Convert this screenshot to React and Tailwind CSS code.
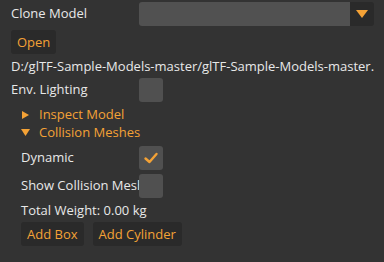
import React from 'react';

const orange = 'text-[#f4a236]';

const Checkbox = ({ checked }) => (
  <div className="w-6 h-6 rounded-[3px] bg-[#505050] flex items-center justify-center">
    {checked && (
      <svg width="16" height="16" viewBox="0 0 16 16">
        <path d="M2.5 8.5 L6.5 12 L13.5 4" fill="none" stroke="#f4a236" strokeWidth="2.4" strokeLinecap="round" strokeLinejoin="round" />
      </svg>
    )}
  </div>
);

const Button = ({ children }) => (
  <button className={`h-6 px-1.5 rounded-[3px] bg-[#2a2a2a] ${orange} leading-6`}>{children}</button>
);

const Row = ({ label, indent, children }) => (
  <div className="flex items-center h-6">
    <div className={`${indent ? 'w-[118px]' : 'w-[128px]'} overflow-hidden whitespace-nowrap`}>{label}</div>
    {children}
  </div>
);

export default function App() {
  return (
    <div className="w-[384px] h-[262px] bg-[#333333] text-[#e8e8e8] text-[13px] font-['Open_Sans',sans-serif] pt-[2px] pl-[11px] pr-[10px] overflow-hidden">
      <div className="flex flex-col gap-1">
        <Row label="Clone Model">
          <div className="flex-1 h-6 flex rounded-[3px] overflow-hidden">
            <div className="flex-1 bg-[#515151]" />
            <div className="w-6 bg-[#2a2a2a] flex items-center justify-center">
              <svg width="12" height="8" viewBox="0 0 12 8">
                <path d="M0 0 H12 L6 8 Z" fill="#f4a236" />
              </svg>
            </div>
          </div>
        </Row>
        <div><Button>Open</Button></div>
        <div className="h-4 leading-4 whitespace-nowrap overflow-hidden">
          D:/glTF-Sample-Models-master/glTF-Sample-Models-master.zip
        </div>
        <Row label="Env. Lighting">
          <Checkbox />
        </Row>
        <div className="pl-[10px] flex flex-col">
          <div className={`flex items-center h-[18px] ${orange}`}>
            <svg width="18" height="10" viewBox="0 0 18 10">
              <path d="M1 1 L8 5 L1 9 Z" fill="#f4a236" />
            </svg>
            <span>Inspect Model</span>
          </div>
          <div className={`flex items-center h-[18px] ${orange}`}>
            <svg width="18" height="10" viewBox="0 0 18 10">
              <path d="M0 1 H9 L4.5 8 Z" fill="#f4a236" />
            </svg>
            <span>Collision Meshes</span>
          </div>
          <div className="flex flex-col gap-1 mt-1">
            <Row label="Dynamic" indent>
              <Checkbox checked />
            </Row>
            <Row label="Show Collision Meshes" indent>
              <Checkbox />
            </Row>
            <div className="h-4 leading-4">Total Weight: 0.00 kg</div>
            <div className="flex gap-[9px]">
              <Button>Add Box</Button>
              <Button>Add Cylinder</Button>
            </div>
          </div>
        </div>
      </div>
    </div>
  );
}
